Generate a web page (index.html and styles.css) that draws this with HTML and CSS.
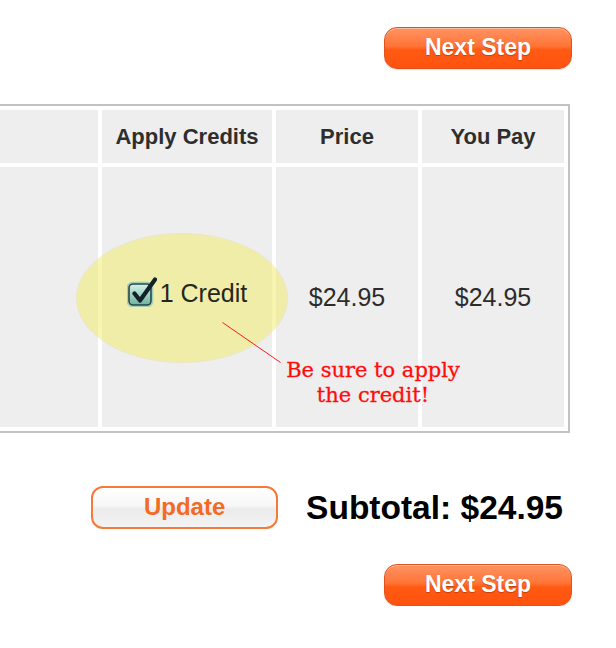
FILE: index.html
```html
<!DOCTYPE html>
<html>
<head>
<meta charset="utf-8">
<link rel="stylesheet" href="styles.css">
</head>
<body>
<div class="page">
  <div class="actions">
    <button class="btn-next">Next Step</button>
  </div>

  <div class="table-wrap">
    <table class="cart">
      <tr class="head">
        <th class="c-item"></th>
        <th class="c-credit">Apply Credits</th>
        <th class="c-price">Price</th>
        <th class="c-pay">You Pay</th>
      </tr>
      <tr class="body">
        <td></td>
        <td class="credit-cell">
          <label class="credit">
            <svg class="check" width="30" height="30" viewBox="0 0 30 30">
              <defs>
                <linearGradient id="boxg" x1="0" y1="0" x2="0" y2="1">
                  <stop offset="0" stop-color="#d4f3e6"/>
                  <stop offset="1" stop-color="#6fb29c"/>
                </linearGradient>
              </defs>
              <rect x="0.5" y="5.5" width="25" height="24" rx="5" fill="none" stroke="#8fc7b6" stroke-width="1.5" opacity="0.8"/>
              <rect x="2" y="7" width="22" height="21" rx="4" fill="url(#boxg)" stroke="#27424a" stroke-width="1.6"/>
              <path d="M7.5 16.5 L13 23.5 L28 2.5" fill="none" stroke="#13212c" stroke-width="4.2" stroke-linecap="round" stroke-linejoin="round"/>
            </svg>
            <span>1 Credit</span>
          </label>
        </td>
        <td class="money">$24.95</td>
        <td class="money">$24.95</td>
      </tr>
    </table>
    <div class="highlight"></div>
    <svg class="pointer" width="60" height="42" viewBox="0 0 60 42">
      <line x1="0.5" y1="0.5" x2="58.5" y2="40.5" stroke="#ff1a1a" stroke-width="1"/>
    </svg>
    <div class="note">Be sure to apply<br>the credit!</div>
  </div>

  <div class="summary">
    <button class="btn-update">Update</button>
    <div class="subtotal">Subtotal: $24.95</div>
  </div>

  <div class="actions bottom">
    <button class="btn-next">Next Step</button>
  </div>
</div>
</body>
</html>
```

FILE: styles.css
```css
html, body {
  margin: 0;
  padding: 0;
  background: #ffffff;
  overflow: hidden;
}

.page {
  width: 616px;
  display: flex;
  flex-direction: column;
  padding-top: 27px;
  font-family: "Liberation Sans", Arial, Helvetica, sans-serif;
}

.actions {
  display: flex;
  justify-content: flex-end;
  padding-right: 44px;
}

.actions.bottom {
  margin-top: 35px;
}

.btn-next {
  width: 188px;
  height: 42px;
  box-sizing: border-box;
  border: 1px solid #e2521c;
  border-radius: 13px;
  background: linear-gradient(#ff9363 0%, #ff7537 45%, #ff5a12 55%, #ff5310 100%);
  box-shadow: inset 0 1px 0 rgba(255,255,255,0.35), 0 1px 1px rgba(0,0,0,0.12);
  color: #ffffff;
  font-family: "Liberation Sans", Arial, Helvetica, sans-serif;
  font-weight: bold;
  font-size: 23px;
  text-shadow: 0 1px 1px rgba(120,30,0,0.45);
  padding: 0 0 2px 0;
  cursor: pointer;
}

.table-wrap {
  position: relative;
  margin-top: 35px;
  display: flex;
  justify-content: flex-end;
  padding-right: 46px;
  overflow: hidden;
}

.cart {
  flex-shrink: 0;
  border: 2px solid #c2c2c2;
  border-spacing: 4px;
  background: #ffffff;
}

.cart th,
.cart td {
  background: #eeeeee;
  padding: 0;
  text-align: center;
  vertical-align: middle;
}

.cart th {
  height: 53px;
  font-size: 22px;
  font-weight: bold;
  color: #2e2e2e;
}

.cart td {
  height: 260px;
  font-size: 25px;
  color: #2c2c2c;
}

.c-item { width: 300px; }
.c-credit { width: 170px; }
.c-price { width: 142px; }
.c-pay { width: 142px; }

.credit {
  position: relative;
  z-index: 2;
  display: inline-flex;
  align-items: center;
  gap: 3px;
  margin-bottom: 8px;
  color: #262620;
}

.check {
  display: block;
  margin-top: -2px;
}

.highlight {
  position: absolute;
  left: 77px;
  top: 130px;
  width: 210px;
  height: 128px;
  border-radius: 50%;
  background: rgba(240, 236, 110, 0.55);
  box-shadow: 0 0 0 1px rgba(225, 215, 120, 0.35);
  z-index: 1;
}

.pointer {
  position: absolute;
  left: 222px;
  top: 218px;
  z-index: 3;
}

.note {
  position: absolute;
  left: 263px;
  top: 254px;
  width: 220px;
  text-align: center;
  font-family: "DejaVu Serif", "Liberation Serif", serif;
  font-size: 21px;
  line-height: 25px;
  color: #ff0d0d;
  -webkit-text-stroke: 0.3px #ff0d0d;
  z-index: 3;
}

.summary {
  margin-top: 53px;
  display: flex;
  align-items: center;
  justify-content: flex-end;
  gap: 28px;
  padding-right: 53px;
}

.btn-update {
  width: 187px;
  height: 43px;
  box-sizing: border-box;
  border: 2px solid #f4793a;
  border-radius: 12px;
  background: linear-gradient(#ffffff 0%, #f7f7f7 45%, #ebebeb 55%, #f4f4f4 100%);
  color: #f36a24;
  font-family: "Liberation Sans", Arial, Helvetica, sans-serif;
  font-weight: bold;
  font-size: 24px;
  padding: 0 0 2px 0;
  cursor: pointer;
}

.subtotal {
  font-size: 33.5px;
  font-weight: bold;
  color: #000000;
}
```
